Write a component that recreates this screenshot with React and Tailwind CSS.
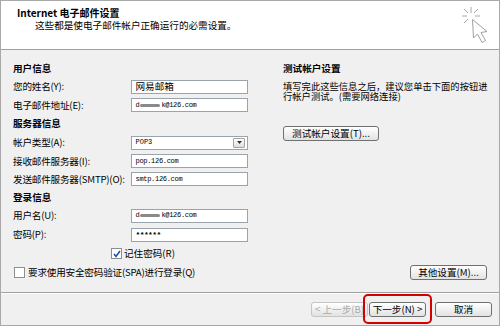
import React from 'react';

const cjk = { fontFamily: '"Noto Sans CJK SC", "Noto Sans", sans-serif' };
const mono = { fontFamily: '"Liberation Mono", "Noto Sans CJK SC", monospace' };

function Field({ children }) {
  return (
    <div
      className="flex h-[14px] w-[117px] items-center border border-[#9aa4ae] bg-white pl-[3px] text-[7px] leading-none tracking-[-0.3px] text-black"
      style={mono}
    >
      {children}
    </div>
  );
}

function Masked() {
  return (
    <span className="flex items-center">
      d
      <span className="mx-[1px] inline-block h-[3px] w-[20px] rounded-full bg-[#8a8a8a] blur-[0.6px]" />
      k@126.com
    </span>
  );
}

function Row({ h, label, children }) {
  return (
    <div className={`flex items-center ${h}`}>
      <div className="w-[119px] whitespace-nowrap tracking-[-0.2px]">{label}</div>
      {children}
    </div>
  );
}

function Section({ h, children }) {
  return <div className={`flex items-center font-bold ${h}`}>{children}</div>;
}

function Checkbox({ checked }) {
  return (
    <span className="flex h-[11px] w-[11px] items-center justify-center border border-[#8b8f94] bg-white">
      {checked && (
        <svg width="8" height="8" viewBox="0 0 8 8">
          <path d="M1 4 L3 6.5 L7 1" fill="none" stroke="#2151a8" strokeWidth="1.6" />
        </svg>
      )}
    </span>
  );
}

function Button({ children, className = '', disabled }) {
  return (
    <div
      className={`flex h-[15px] items-center justify-center rounded-[3px] border bg-gradient-to-b from-white to-[#e2e2e2] leading-none ${
        disabled ? 'border-[#c4c4c4] text-[#a8a8a8]' : 'border-[#707070] text-black'
      } ${className}`}
    >
      {children}
    </div>
  );
}

function WizardIcon() {
  return (
    <svg width="34" height="44" viewBox="0 0 34 44" className="absolute right-[6px] top-[3px]">
      <g stroke="#a8a8a8" strokeWidth="1" fill="none">
        <line x1="12" y1="3" x2="12" y2="9" />
        <line x1="3" y1="12" x2="8" y2="12" />
        <line x1="16" y1="12" x2="21" y2="12" />
        <line x1="5" y1="5" x2="9" y2="9" />
        <line x1="19" y1="5" x2="15" y2="9" />
        <line x1="5" y1="19" x2="9" y2="15" />
      </g>
      <path
        d="M13.5 15.5 L14.5 34 L18.5 30 L23 38.5 L26.5 36.5 L22 28.5 L28 27.5 Z"
        fill="white"
        stroke="#a0a0a0"
        strokeWidth="1"
        strokeLinejoin="round"
      />
    </svg>
  );
}

export default function App() {
  return (
    <div
      className="flex h-[326px] w-[500px] flex-col overflow-hidden border border-[#a9a9a9] bg-[#f0f0f0] text-[9.6px] text-black"
      style={cjk}
    >
      {/* Header */}
      <div className="relative h-[49px] shrink-0 border-b border-[#a0a0a0] bg-white pl-[16px] pt-[6px]">
        <div className="h-[12px] text-[10px] font-bold leading-[11px]">Internet 电子邮件设置</div>
        <div className="h-[12px] pl-[18px] leading-[12px]">这些都是使电子邮件帐户正确运行的必需设置。</div>
        <WizardIcon />
      </div>

      {/* Body */}
      <div className="flex h-[242px] shrink-0">
        <div className="w-[247px] shrink-0 pl-[12px] pt-[9px]">
          <Section h="h-[18px]">用户信息</Section>
          <Row h="h-[19px]" label="您的姓名(Y):">
            <div
              className="flex h-[14px] w-[117px] items-center border border-[#9aa4ae] bg-white pl-[3px] text-[9.6px] leading-none"
              style={cjk}
            >
              网易邮箱
            </div>
          </Row>
          <Row h="h-[18px]" label="电子邮件地址(E):">
            <Field>
              <Masked />
            </Field>
          </Row>
          <Section h="h-[19px]">服务器信息</Section>
          <Row h="h-[19px]" label="帐户类型(A):">
            <div className="flex h-[14px] w-[117px] items-center justify-between border border-[#9aa4ae] bg-white pl-[3px] pr-[2px]">
              <span className="text-[7px] leading-none" style={mono}>POP3</span>
              <span className="flex h-[10px] w-[12px] items-center justify-center rounded-[1px] border border-[#a3a3a3] bg-gradient-to-b from-white to-[#dedede]">
                <svg width="5" height="3" viewBox="0 0 5 3">
                  <path d="M0 0 L5 0 L2.5 3 Z" fill="#333" />
                </svg>
              </span>
            </div>
          </Row>
          <Row h="h-[18px]" label="接收邮件服务器(I):">
            <Field>pop.126.com</Field>
          </Row>
          <Row h="h-[18px]" label="发送邮件服务器(SMTP)(O):">
            <Field>smtp.126.com</Field>
          </Row>
          <Section h="h-[18px]">登录信息</Section>
          <Row h="h-[19px]" label="用户名(U):">
            <Field>
              <Masked />
            </Field>
          </Row>
          <Row h="h-[19px]" label="密码(P):">
            <Field>
              <span className="text-[8px] font-bold tracking-[-0.6px]">******</span>
            </Field>
          </Row>
          <div className="flex h-[19px] items-center gap-[2px] pl-[98px]">
            <Checkbox checked />
            <span>记住密码(R)</span>
          </div>
          <div className="flex h-[18px] items-center gap-[3px] pl-[1px]">
            <Checkbox />
            <span className="tracking-[-0.2px]">要求使用安全密码验证(SPA)进行登录(Q)</span>
          </div>
        </div>

        <div className="flex flex-1 flex-col pl-[35px] pr-[10px] pt-[9px]">
          <div className="flex h-[18px] items-center font-bold">测试帐户设置</div>
          <div className="mt-[4px] whitespace-nowrap text-[9.3px] leading-[10px]">
            填写完此这些信息之后，建议您单击下面的按钮进
            <br />
            行帐户测试。(需要网络连接)
          </div>
          <Button className="mt-[25px] w-[96px]">测试帐户设置(T)...</Button>
          <div className="mt-auto mb-[12px] flex justify-end pr-[2px]">
            <Button className="w-[77px]">其他设置(M)...</Button>
          </div>
        </div>
      </div>

      {/* Footer */}
      <div className="flex flex-1 items-start justify-end border-t border-[#a0a0a0] pr-[7px] pt-[9px] shadow-[inset_0_1px_0_#ffffff]">
        <Button disabled className="w-[57px]">&lt; 上一步(B)</Button>
        <div className="relative ml-[1px]">
          <Button className="w-[57px]">下一步(N) &gt;</Button>
          <div className="pointer-events-none absolute -bottom-[7px] -left-[6px] -right-[6px] -top-[8px] rounded-[5px] border-2 border-[#d40000]" />
        </div>
        <Button className="ml-[9px] w-[57px]">取消</Button>
      </div>
    </div>
  );
}
